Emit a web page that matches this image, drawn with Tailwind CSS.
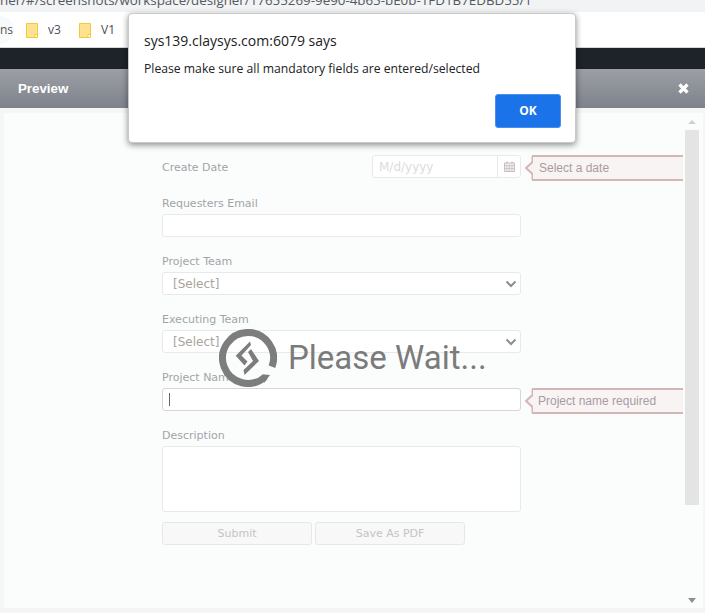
<!doctype html>
<html><head><meta charset="utf-8"><script src="https://cdn.jsdelivr.net/npm/@tailwindcss/browser@4"></script></head>
<body class="w-[705px] h-[613px] overflow-hidden bg-white relative font-['Noto_Sans',sans-serif]">
<div class="h-[12px] bg-[#f1f3f4] overflow-hidden text-[13.35px] leading-[12px] text-[#55585c] font-['Open_Sans',sans-serif]"><div class="-mt-[6px] whitespace-nowrap">ner/#/screenshots/workspace/designer/17655269-9e90-4b65-bE0b-1FD1B7EDBD55/1</div></div>
<div class="h-[36px] bg-white flex items-center text-[12px] text-[#4a4d55] font-['Open_Sans',sans-serif] border-b border-[#d5d6d8]">
  <span class="w-[14px] h-[28px] leading-[28px] bg-[#f8f9fa] rounded-r-full text-[#555]">ns</span>
  <svg class="ml-[12px] mt-[1px] w-[12px] h-[15px]" viewBox="0 0 12 15"><path d="M.5.5h11v14H.5z" fill="#ffe28f" stroke="#f0c93f"/><path d="M9 11.500h2.500v3H9z" fill="#fff" stroke="#f0c93f"/></svg>
  <span class="ml-[10px] w-[19px]">v3</span>
  <svg class="ml-[12px] mt-[1px] w-[12px] h-[15px]" viewBox="0 0 12 15"><path d="M.5.5h11v14H.5z" fill="#ffe28f" stroke="#f0c93f"/><path d="M9 11.500h2.500v3H9z" fill="#fff" stroke="#f0c93f"/></svg>
  <span class="ml-[10px]">V1</span>
</div>
<div class="h-[21px] bg-[#1e2229]"></div>
<div class="h-[39px] bg-linear-to-b from-[#9c9fa5] to-[#7e828b] flex items-center justify-between pl-[18px] pr-[16px] text-white font-['Liberation_Sans',sans-serif] font-bold text-[13.3px]">
  <span>Preview</span>
  <svg class="w-[11px] h-[11px]" viewBox="0 0 11 11"><path d="M1.500 1.500l8 8M9.500 1.500l-8 8" stroke="#fff" stroke-width="3.200"/></svg>
</div>
<div class="h-[500px] bg-[#f5f7f6] pl-[4px] pr-[2px] flex">
  <div class="flex-1 bg-[#fbfdfc] mt-[5px] pt-[15px] pl-[158px] text-[11px] leading-[14px] text-[#a0a4a8] font-['DejaVu_Sans',sans-serif] relative">
    <div class="w-[359px] flex items-center h-[23px] mt-[27px] justify-between">
      <span class="pt-[2px]">Create Date</span>
      <div class="flex w-[149px] h-[23px] border border-[#e8e9e9] rounded-[3px] bg-white"><span class="flex-1 pl-[6px] leading-[22px] text-[#dcdcdc] text-[12px]">M/d/yyyy</span><span class="w-[23px] border-l border-[#e8e9e9] flex items-center justify-center"><svg class="w-[11px] h-[11px]" viewBox="0 0 11 11"><path d="M.5 2h10v8.500H.5z" fill="#eee" stroke="#c9bfc5"/><path d="M.5 4.500h10M3 4.500v6M5.500 4.500v6M8 4.500v6M.5 7.500h10" stroke="#c9bfc5" stroke-width=".8"/><path d="M3 .5v2M8 .5v2" stroke="#b8aeb4"/></svg></span></div>
    </div>
    <div class="mt-[19px] h-[14px]">Requesters Email</div>
    <div class="mt-[3px] w-[359px] h-[23px] bg-white border border-[#e8e9e9] rounded-[3px]"></div>
    <div class="mt-[18px] h-[14px]">Project Team</div>
    <div class="mt-[3px] w-[359px] h-[23px] bg-white border border-[#e8e9e9] rounded-[3px] flex items-center justify-between pl-[10px] pr-[3px] text-[12px]"><span class="text-[#a8a49c] pt-[1px]">[Select]</span><svg class="w-[12px] h-[8px]" viewBox="0 0 12 8"><path d="M1.500 1.500L6 6l4.500-4.500" fill="none" stroke="#8c8f92" stroke-width="2"/></svg></div>
    <div class="mt-[18px] h-[14px]">Executing Team</div>
    <div class="mt-[3px] w-[359px] h-[23px] bg-white border border-[#e8e9e9] rounded-[3px] flex items-center justify-between pl-[10px] pr-[3px] text-[12px]"><span class="text-[#a8a49c] pt-[1px]">[Select]</span><svg class="w-[12px] h-[8px]" viewBox="0 0 12 8"><path d="M1.500 1.500L6 6l4.500-4.500" fill="none" stroke="#8c8f92" stroke-width="2"/></svg></div>
    <div class="mt-[18px] h-[14px]">Project Name</div>
    <div class="mt-[3px] w-[359px] h-[23px] bg-white border border-[#d5d6d7] rounded-[3px] flex items-center pl-[6px]"><span class="w-px h-[13px] bg-[#666]"></span></div>
    <div class="mt-[18px] h-[14px]">Description</div>
    <div class="mt-[3px] w-[359px] h-[66px] bg-white border border-[#e8e9e9] rounded-[3px]"></div>
    <div class="mt-[10px] flex gap-[3px] text-[#c2c4c5]">
      <div class="w-[150px] h-[23px] border border-[#e6e7e7] rounded-[3px] bg-[#f8f8f8] text-center leading-[22px]">Submit</div>
      <div class="w-[150px] h-[23px] border border-[#e6e7e7] rounded-[3px] bg-[#f8f8f8] text-center leading-[22px]">Save As PDF</div>
    </div>
    <!-- validation callouts -->
    <div class="absolute left-[520px] top-[42px] w-[159px] h-[26px] flex items-stretch font-['Liberation_Sans',sans-serif] text-[12px] text-[#a99ba0]">
      <svg class="w-[9px] h-[26px] -mr-px z-10" viewBox="0 0 9 26"><path d="M8.500 1v6L2 13l6.500 6v6" fill="#f8f4f4" stroke="#d3b7b7" stroke-width="2"/></svg>
      <div class="flex-1 bg-[#f8f4f4] border-y-2 border-[#d3b7b7] pl-[7px] leading-[22px]">Select a date</div>
    </div>
    <div class="absolute left-[520px] top-[275px] w-[159px] h-[26px] flex items-stretch font-['Liberation_Sans',sans-serif] text-[12px] text-[#a99ba0]">
      <svg class="w-[9px] h-[26px] -mr-px z-10" viewBox="0 0 9 26"><path d="M8.500 1v6L2 13l6.500 6v6" fill="#f8f4f4" stroke="#d3b7b7" stroke-width="2"/></svg>
      <div class="flex-1 bg-[#f8f4f4] border-y-2 border-[#d3b7b7] pl-[6px] leading-[22px]">Project name required</div>
    </div>
    <!-- scrollbar -->
    <div class="absolute right-[4px] top-0 bottom-0 w-[14px] flex flex-col items-center">
      <div class="h-[17px] flex items-center"><div class="w-0 h-0 border-x-[4px] border-x-transparent border-b-[4px] border-b-[#cfcfcf]"></div></div>
      <div class="w-full h-[375px] bg-[#e4e4e4]"></div>
      <div class="flex-1"></div>
      <div class="h-[10px] flex items-start"><div class="w-0 h-0 border-x-[4px] border-x-transparent border-t-[5px] border-t-[#8f8f8f]"></div></div>
    </div>
  </div>
</div>
<div class="h-[5px] bg-[#f5f5f5]"></div>
<!-- Please Wait loader -->
<div class="absolute left-[219px] top-[329px] flex items-center gap-[11px]">
  <svg class="w-[58px] h-[58px]" viewBox="0 0 58 58"><path d="M53 37.700A25.500 25.500 0 1 0 46 48" fill="none" stroke="#7d7d7d" stroke-width="7"/><path d="M43.700 45.300L51 46l-6 8z" fill="#7d7d7d"/><path d="M16.700 26.700L31 12.500l1 3.500-9.500 10.500 6 6-3 4z" fill="#7d7d7d"/><path d="M29 23l3-3 8 12-14.500 14-1-5 9.500-9z" fill="#7d7d7d"/></svg>
  <span class="text-[33px] leading-[40px] text-[#7b7b7b] font-['Roboto',sans-serif]">Please Wait...</span>
</div>
<!-- alert dialog -->
<div class="absolute left-[128px] top-[13px] w-[448px] h-[130px] bg-white rounded-[4px] border border-[#c8c8c8] shadow-[0_2px_6px_rgba(0,0,0,0.45)] pl-[15px] pr-[15px] pt-[17px] text-[#202124] font-['Open_Sans',sans-serif]">
  <div class="text-[14px] leading-[20px]">sys139.claysys.com:6079 says</div>
  <div class="mt-[9px] text-[12.2px] leading-[18px]">Please make sure all mandatory fields are entered/selected</div>
  <div class="absolute right-[14px] bottom-[14px] w-[66px] h-[34px] rounded-[3px] bg-[#1a73e8] border border-[#4b8fee] text-white text-[12px] font-bold flex items-center justify-center">OK</div>
</div>
</body></html>
